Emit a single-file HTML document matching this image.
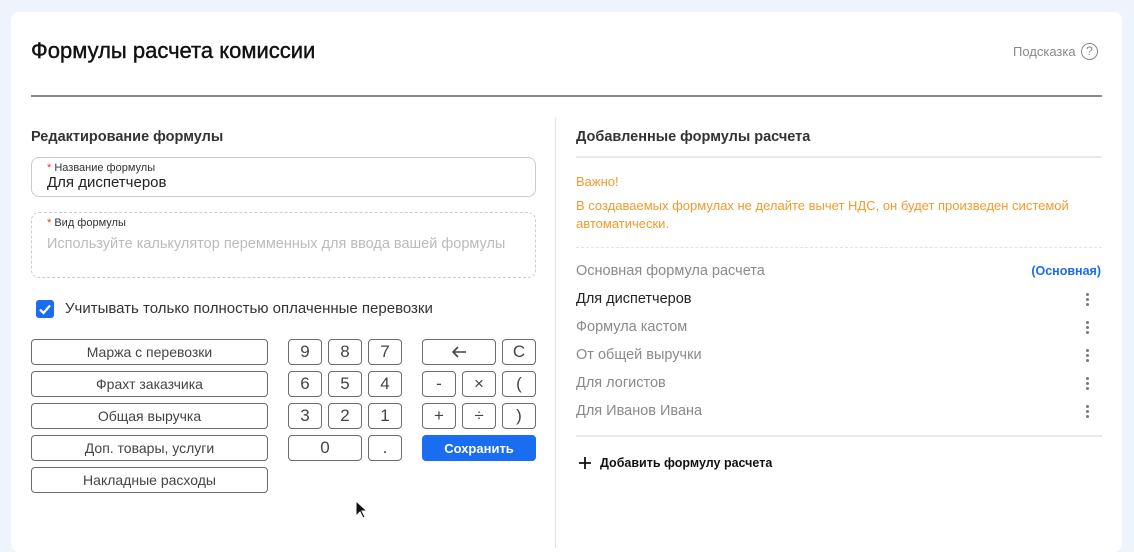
<!DOCTYPE html>
<html><head><meta charset="utf-8"><style>
*{box-sizing:border-box;margin:0;padding:0}
body{width:1134px;height:544px;background:#eff3fb;font-family:"Liberation Sans",Arial,sans-serif;position:relative;overflow:hidden;color:#222}
.card{position:absolute;left:11px;top:12px;width:1111px;height:540px;background:#fff;border-radius:8px}
.a{position:absolute;white-space:nowrap}
.b{position:absolute;border:1.5px solid #6b6b6b;border-radius:4px;height:26px;display:flex;align-items:center;justify-content:center;font-size:14px;color:#444;background:#fff}
.n{font-size:17px;color:#444}
.dots{position:absolute;left:1086px;width:3px}
.dots i{display:block;width:3px;height:3px;border-radius:50%;background:#777;margin-bottom:2px}
.row{position:absolute;left:576px;font-size:14.5px;color:#8a8a8a}
</style></head><body>
<div class="card"></div>
<div class="a" style="left:31px;top:38px;font-size:22px;color:#111;-webkit-text-stroke:0.4px #111">Формулы расчета комиссии</div>
<div class="a" style="left:1013px;top:44px;font-size:13px;color:#888">Подсказка</div>
<div class="a" style="left:1081px;top:43px;width:17px;height:17px;border:1.5px solid #888;border-radius:50%;font-size:12px;color:#888;text-align:center;line-height:14px">?</div>
<div class="a" style="left:31px;top:95px;width:1071px;height:2px;background:#8a8a8a"></div>
<div class="a" style="left:555px;top:118px;width:1px;height:430px;background:#e4e4e4"></div>

<div class="a" style="left:31px;top:129px;font-size:14.5px;font-weight:bold;color:#333">Редактирование формулы</div>
<div class="a" style="left:31px;top:157px;width:505px;height:40px;border:1.5px solid #ccc;border-radius:8px"></div>
<div class="a" style="left:47px;top:162px;font-size:11px;color:#333"><span style="color:#e33">*</span> Название формулы</div>
<div class="a" style="left:47px;top:174px;font-size:15px;color:#222">Для диспетчеров</div>
<div class="a" style="left:31px;top:212px;width:505px;height:66px;border:1.5px dashed #ccc;border-radius:8px"></div>
<div class="a" style="left:47px;top:217px;font-size:11px;color:#333"><span style="color:#e33">*</span> Вид формулы</div>
<div class="a" style="left:47px;top:236px;font-size:14.5px;color:#bbb">Используйте калькулятор перемменных для ввода вашей формулы</div>
<div class="a" style="left:36px;top:300px;width:18px;height:18px;background:#1a6cf0;border-radius:3px"><svg width="18" height="18"><path d="M4 9.5l3.5 3.5L14 5.5" stroke="#fff" stroke-width="2.2" fill="none"/></svg></div>
<div class="a" style="left:65px;top:300px;font-size:15px;color:#333">Учитывать только полностью оплаченные перевозки</div>

<div class="b" style="left:31px;top:339px;width:237px">Маржа с перевозки</div>
<div class="b" style="left:31px;top:371px;width:237px">Фрахт заказчика</div>
<div class="b" style="left:31px;top:403px;width:237px">Общая выручка</div>
<div class="b" style="left:31px;top:435px;width:237px">Доп. товары, услуги</div>
<div class="b" style="left:31px;top:467px;width:237px">Накладные расходы</div>

<div class="b n" style="left:288px;top:339px;width:34px">9</div>
<div class="b n" style="left:328px;top:339px;width:34px">8</div>
<div class="b n" style="left:368px;top:339px;width:34px">7</div>
<div class="b n" style="left:288px;top:371px;width:34px">6</div>
<div class="b n" style="left:328px;top:371px;width:34px">5</div>
<div class="b n" style="left:368px;top:371px;width:34px">4</div>
<div class="b n" style="left:288px;top:403px;width:34px">3</div>
<div class="b n" style="left:328px;top:403px;width:34px">2</div>
<div class="b n" style="left:368px;top:403px;width:34px">1</div>
<div class="b n" style="left:288px;top:435px;width:74px">0</div>
<div class="b n" style="left:368px;top:435px;width:34px">.</div>

<div class="b n" style="left:422px;top:339px;width:74px"><svg width="16" height="12"><path d="M15 6H2M7 1L2 6l5 5" stroke="#444" stroke-width="1.6" fill="none"/></svg></div>
<div class="b n" style="left:502px;top:339px;width:34px">C</div>
<div class="b n" style="left:422px;top:371px;width:34px">-</div>
<div class="b n" style="left:462px;top:371px;width:34px">×</div>
<div class="b n" style="left:502px;top:371px;width:34px">(</div>
<div class="b n" style="left:422px;top:403px;width:34px">+</div>
<div class="b n" style="left:462px;top:403px;width:34px">÷</div>
<div class="b n" style="left:502px;top:403px;width:34px">)</div>
<div class="b" style="left:422px;top:435px;width:114px;background:#1a6cf0;border-color:#1a6cf0;color:#fff;font-weight:bold;font-size:13px">Сохранить</div>

<svg class="a" style="left:355px;top:500px" width="14" height="20"><path d="M1 1v15l4-4 3 6 2-1-3-6h5z" fill="#111" stroke="#fff" stroke-width="1"/></svg>

<div class="a" style="left:576px;top:129px;font-size:14.5px;font-weight:bold;color:#333">Добавленные формулы расчета</div>
<div class="a" style="left:576px;top:156px;width:526px;height:2px;background:#eaeaea"></div>
<div class="a" style="left:576px;top:174px;font-size:13px;color:#f39a2b">Важно!</div>
<div class="a" style="left:576px;top:197px;font-size:13px;color:#f39a2b;line-height:18px">В создаваемых формулах не делайте вычет НДС, он будет произведен системой<br>автоматически.</div>
<div class="a" style="left:576px;top:247px;width:526px;border-top:1.5px dashed #e2e2e2"></div>
<div class="row" style="top:263px">Основная формула расчета</div>
<div class="a" style="right:33px;top:264px;font-size:12.5px;font-weight:bold;color:#1a6cf0">(Основная)</div>
<div class="row" style="top:291px;color:#222">Для диспетчеров</div>
<div class="row" style="top:319px">Формула кастом</div>
<div class="row" style="top:347px">От общей выручки</div>
<div class="row" style="top:375px">Для логистов</div>
<div class="row" style="top:403px">Для Иванов Ивана</div>
<div class="dots" style="top:293px"><i></i><i></i><i></i></div>
<div class="dots" style="top:321px"><i></i><i></i><i></i></div>
<div class="dots" style="top:349px"><i></i><i></i><i></i></div>
<div class="dots" style="top:377px"><i></i><i></i><i></i></div>
<div class="dots" style="top:405px"><i></i><i></i><i></i></div>
<div class="a" style="left:576px;top:435px;width:526px;height:2px;background:#eaeaea"></div>
<svg class="a" style="left:578px;top:456px" width="14" height="14"><path d="M7 1v12M1 7h12" stroke="#111" stroke-width="1.8"/></svg>
<div class="a" style="left:600px;top:456px;font-size:12.5px;font-weight:bold;color:#111">Добавить формулу расчета</div>
</body></html>
